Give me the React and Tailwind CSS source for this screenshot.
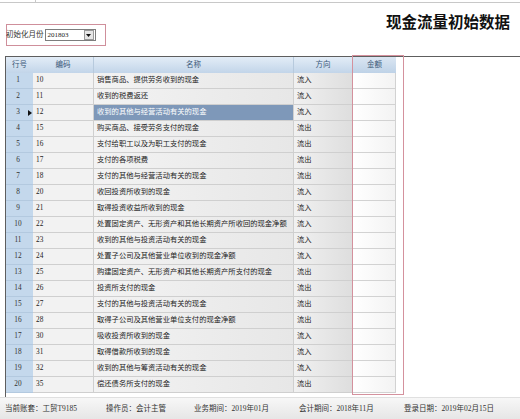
import React from "react";

const rows = [
  ["1", "10", "销售商品、提供劳务收到的现金", "流入"],
  ["2", "11", "收到的税费返还", "流入"],
  ["3", "12", "收到的其他与经营活动有关的现金", "流入"],
  ["4", "15", "购买商品、接受劳务支付的现金", "流出"],
  ["5", "16", "支付给职工以及为职工支付的现金", "流出"],
  ["6", "17", "支付的各项税费", "流出"],
  ["7", "18", "支付的其他与经营活动有关的现金", "流出"],
  ["8", "20", "收回投资所收到的现金", "流入"],
  ["9", "21", "取得投资收益所收到的现金", "流入"],
  ["10", "22", "处置固定资产、无形资产和其他长期资产所收回的现金净额", "流入"],
  ["11", "23", "收到的其他与投资活动有关的现金", "流入"],
  ["12", "24", "处置子公司及其他营业单位收到的现金净额", "流入"],
  ["13", "25", "购建固定资产、无形资产和其他长期资产所支付的现金", "流出"],
  ["14", "26", "投资所支付的现金", "流出"],
  ["15", "27", "支付的其他与投资活动有关的现金", "流出"],
  ["16", "28", "取得子公司及其他营业单位支付的现金净额", "流出"],
  ["17", "30", "吸收投资所收到的现金", "流入"],
  ["18", "31", "取得借款所收到的现金", "流入"],
  ["19", "32", "收到的其他与筹资活动有关的现金", "流入"],
  ["20", "35", "偿还债务所支付的现金", "流出"],
];

const font = { fontFamily: '"Liberation Serif", "Noto Sans CJK SC", serif' };

export default function App() {
  return (
    <div
      className="relative w-[520px] h-[419px] overflow-hidden bg-white text-[#222]"
      style={font}
    >
      {/* top strip */}
      <div className="h-[3px] border-b border-[#c8c8c8] flex">
        <div className="w-[36px] border-r border-[#c8c8c8]" />
      </div>

      {/* header area */}
      <div className="h-[53px] flex justify-between">
        <div className="mt-[21px] ml-[6px] w-[100px] h-[22px] border border-[#cf8f9b] flex items-center">
          <span className="ml-[-1px] text-[7.5px] text-[#333] leading-none">初始化月份</span>
          <div className="ml-[1px] w-[51px] h-[12px] border border-[#7d7d7d] bg-white flex items-center justify-between">
            <span className="ml-[2px] text-[7px] leading-none">201803</span>
            <div className="w-[10px] h-[10px] mr-[1px] bg-[#e6e6e6] border border-[#9a9a9a] flex items-center justify-center">
              <svg width="5" height="3" viewBox="0 0 5 3">
                <path d="M0 0 L5 0 L2.5 3 Z" fill="#111" />
              </svg>
            </div>
          </div>
        </div>
        <div
          className="mt-[7px] mr-[10px] text-[15.5px] font-bold leading-[22px] text-[#111]"
          style={{ fontFamily: '"Noto Sans CJK SC", sans-serif' }}
        >
          现金流量初始数据
        </div>
      </div>

      {/* table */}
      <div className="ml-[5px] h-[341px] border-l border-t border-[#5e5e5e]">
        {/* header row */}
        <div className="flex h-[16px] text-[7.5px] text-[#3b5878] bg-linear-to-b from-[#e3edf7] to-[#c2d5e9]">
          <div className="w-[27px] flex items-center pl-[6px]">行号</div>
          <div className="w-[61px] flex items-center justify-center border-r border-[#b7cadd]">编码</div>
          <div className="w-[200px] flex items-center justify-center border-r border-[#b7cadd]">名称</div>
          <div className="w-[59px] flex items-center justify-center border-r border-[#b7cadd]">方向</div>
          <div className="w-[43px] flex items-center justify-center bg-linear-to-b from-[#dbe6f2] to-[#bed2e7]">金额</div>
          <div className="flex-1 bg-white" />
        </div>
        {rows.map(([n, code, name, dir]) => {
          const sel = n === "3";
          return (
            <div key={n} className="flex h-[16px] text-[7.3px]">
              <div className="w-[27px] relative bg-[#c4d8ec] border-b border-[#b3c9df] flex items-center justify-center pr-[3px] text-[#333]">
                {n}
                {sel && (
                  <svg className="absolute left-[22px] top-[5px]" width="4" height="6" viewBox="0 0 4 6">
                    <path d="M0 0 L4 3 L0 6 Z" fill="#111" />
                  </svg>
                )}
              </div>
              <div className="w-[61px] bg-[#f2f2f2] border-b border-r border-[#cfcfcf] flex items-center pl-[3px]">
                {code}
              </div>
              <div
                className={
                  sel
                    ? "w-[200px] bg-[#7e98b9] text-white border-b border-r border-[#cfcfcf] flex items-center pl-[3px] whitespace-nowrap overflow-hidden"
                    : "w-[200px] bg-linear-to-r from-[#f3f3f3] to-[#e7e7e7] border-b border-r border-[#cfcfcf] flex items-center pl-[3px] whitespace-nowrap overflow-hidden"
                }
              >
                {name}
              </div>
              <div className="w-[59px] bg-linear-to-r from-[#f1f1f1] to-[#dedede] border-b border-r border-[#cfcfcf] flex items-center pl-[3px]">
                {dir}
              </div>
              <div className="w-[43px] bg-linear-to-r from-white to-[#f3f3f3] border-b border-r border-[#d2d2d2]" />
              <div className="flex-1 bg-white" />
            </div>
          );
        })}
      </div>

      {/* status bar */}
      <div className="h-[22px] bg-linear-to-b from-[#f7f7f7] to-[#e6e6e6] border-t border-[#e0e0e0] flex items-center pl-[5px] text-[7.5px] text-[#333] whitespace-nowrap">
        <div className="w-[101px]">当前账套：工贸T9185</div>
        <div className="w-[88px]">操作员：会计主管</div>
        <div className="w-[105px]">业务期间：2019年01月</div>
        <div className="w-[105px]">会计期间：2018年11月</div>
        <div>登录日期：2019年02月15日</div>
      </div>

      {/* annotation box around 金额 */}
      <div className="absolute left-[352px] top-[55px] w-[52px] h-[340px] border border-[#d4919d] pointer-events-none" />
    </div>
  );
}
